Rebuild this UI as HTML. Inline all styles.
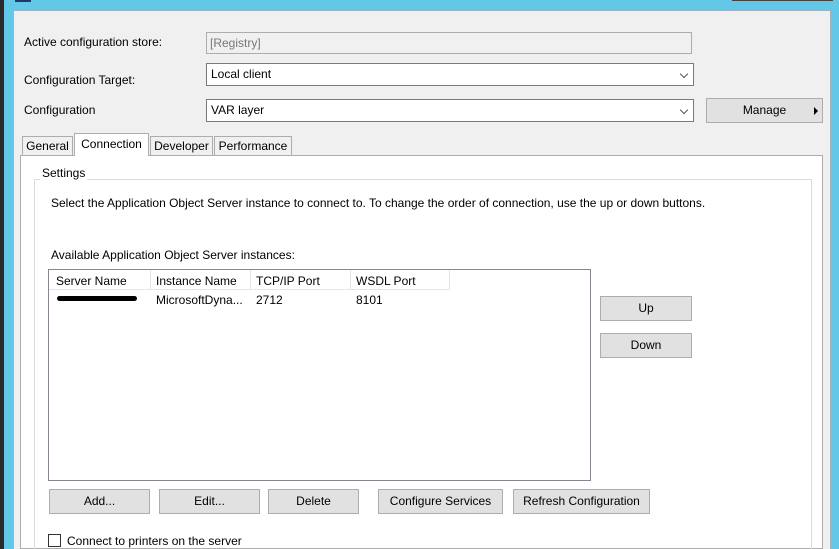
<!DOCTYPE html>
<html><head><style>
*{box-sizing:border-box;margin:0;padding:0}
body{width:839px;height:549px;overflow:hidden;background:#63c8e8;font-family:"Liberation Sans",sans-serif;font-size:12px;color:#000;position:relative}
.a{position:absolute}
.btn{position:absolute;background:#e1e1e1;border:1px solid #adadad;text-align:center;line-height:22px}
.combo{position:absolute;background:#fff;border:1px solid #7a7a7a;padding-left:4px;line-height:21px}
.combo:after{content:"";position:absolute;right:6px;top:7px;width:5px;height:5px;border-right:1px solid #555;border-bottom:1px solid #555;transform:rotate(45deg)}
.tab{position:absolute;background:#f0f0f0;border:1px solid #adadad;border-bottom:none;text-align:center;line-height:18px}
</style></head><body>
<div class="a" style="left:0;top:0;width:4px;height:549px;background:#2b2b2b"></div>
<div class="a" style="left:15px;top:0;width:16px;height:2px;background:#1b3a6b"></div>
<div class="a" style="left:732px;top:0;width:101px;height:1px;background:#444"></div>
<div class="a" style="left:13px;top:10px;width:818px;height:539px;background:#f0f0f0;border-top:1px solid #a0b4c0;border-left:1px solid #a0b4c0;border-right:1px solid #a0b4c0"></div>

<div class="a" style="left:24px;top:35px">Active configuration store:</div>
<div class="a" style="left:206px;top:32px;width:486px;height:22px;border:1px solid #adadad;color:#777;padding-left:3px;line-height:20px">[Registry]</div>
<div class="a" style="left:24px;top:73px">Configuration Target:</div>
<div class="combo" style="left:206px;top:63px;width:488px;height:23px">Local client</div>
<div class="a" style="left:24px;top:103px">Configuration</div>
<div class="combo" style="left:206px;top:99px;width:488px;height:23px">VAR layer</div>
<div class="btn" style="left:706px;top:98px;width:117px;height:25px;line-height:23px">Manage<span style="position:absolute;right:4px;top:8px;border-left:4px solid #000;border-top:4px solid transparent;border-bottom:4px solid transparent"></span></div>

<div class="a" style="left:20px;top:155px;width:803px;height:394px;background:#fff;border:1px solid #adadad"></div>
<div class="tab" style="left:22px;top:136px;width:51px;height:19px">General</div>
<div class="tab" style="left:74px;top:133px;width:75px;height:23px;background:#fff;line-height:20px">Connection</div>
<div class="tab" style="left:150px;top:136px;width:63px;height:19px">Developer</div>
<div class="tab" style="left:214px;top:136px;width:78px;height:19px">Performance</div>

<div class="a" style="left:34px;top:179px;width:778px;height:370px;border:1px solid #dcdcdc;border-bottom:none"></div>
<div class="a" style="left:40px;top:166px;background:#fff;padding:0 2px">Settings</div>
<div class="a" style="left:51px;top:196px">Select the Application Object Server instance to connect to. To change the order of connection, use the up or down buttons.</div>
<div class="a" style="left:51px;top:248px">Available Application Object Server instances:</div>

<div class="a" style="left:48px;top:269px;width:543px;height:212px;border:1px solid #828790;background:#fff"></div>
<div class="a" style="left:49px;top:270px;width:401px;height:20px;border-bottom:1px solid #e5e5e5"></div>
<div class="a" style="left:150px;top:270px;width:1px;height:20px;background:#e5e5e5"></div>
<div class="a" style="left:250px;top:270px;width:1px;height:20px;background:#e5e5e5"></div>
<div class="a" style="left:350px;top:270px;width:1px;height:20px;background:#e5e5e5"></div>
<div class="a" style="left:449px;top:270px;width:1px;height:20px;background:#e5e5e5"></div>
<div class="a" style="left:56px;top:274px">Server Name</div>
<div class="a" style="left:156px;top:274px">Instance Name</div>
<div class="a" style="left:256px;top:274px">TCP/IP Port</div>
<div class="a" style="left:356px;top:274px">WSDL Port</div>
<div class="a" style="left:57px;top:296px;width:80px;height:5px;background:#000;border-radius:3px"></div>
<div class="a" style="left:156px;top:293px">MicrosoftDyna...</div>
<div class="a" style="left:256px;top:293px">2712</div>
<div class="a" style="left:356px;top:293px">8101</div>

<div class="btn" style="left:600px;top:296px;width:92px;height:25px">Up</div>
<div class="btn" style="left:600px;top:333px;width:92px;height:25px">Down</div>

<div class="btn" style="left:49px;top:489px;width:101px;height:25px">Add...</div>
<div class="btn" style="left:159px;top:489px;width:101px;height:25px">Edit...</div>
<div class="btn" style="left:268px;top:489px;width:91px;height:25px">Delete</div>
<div class="btn" style="left:378px;top:489px;width:125px;height:25px">Configure Services</div>
<div class="btn" style="left:513px;top:489px;width:137px;height:25px">Refresh Configuration</div>

<div class="a" style="left:48px;top:534px;width:13px;height:13px;border:1px solid #333;background:#fff"></div>
<div class="a" style="left:67px;top:534px">Connect to printers on the server</div>
</body></html>
